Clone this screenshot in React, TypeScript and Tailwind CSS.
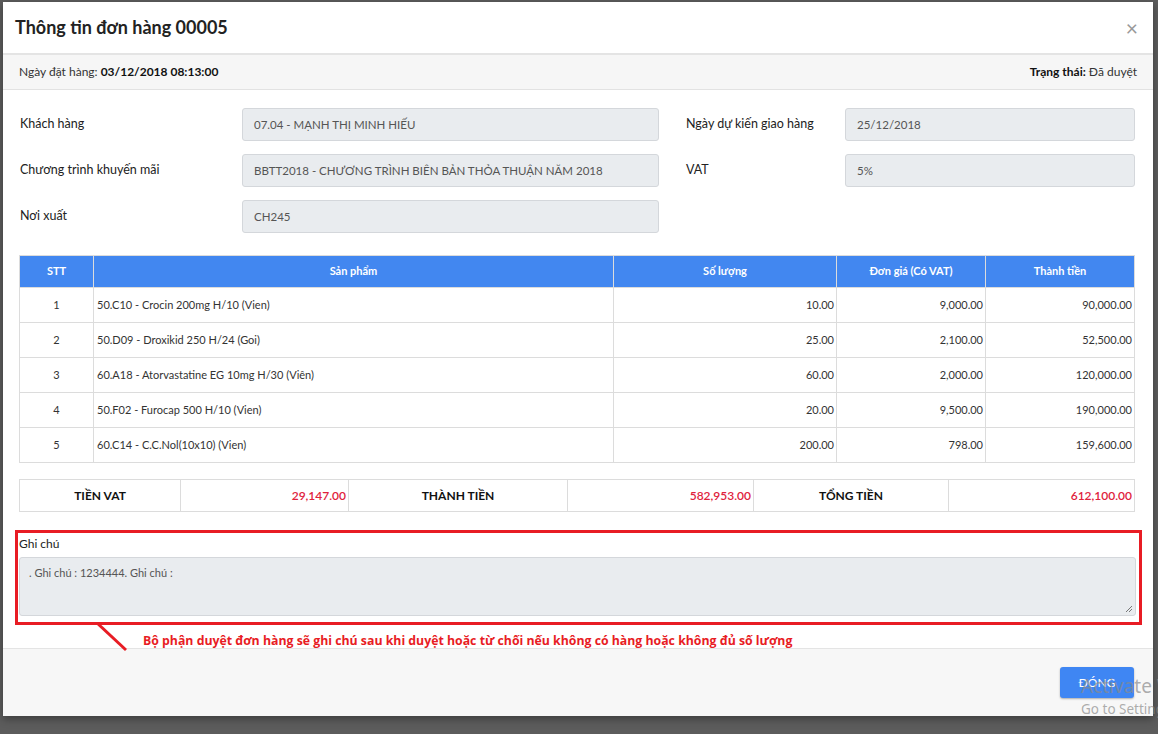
import React from 'react'

const font = {fontFamily: 'Lato, "Open Sans", "Noto Sans", sans-serif'}

const items = [
    {stt: 1, name: '50.C10 - Crocin 200mg H/10 (Vien)', qty: '10.00', price: '9,000.00', total: '90,000.00'},
    {stt: 2, name: '50.D09 - Droxikid 250 H/24 (Goi)', qty: '25.00', price: '2,100.00', total: '52,500.00'},
    {stt: 3, name: '60.A18 - Atorvastatine EG 10mg H/30 (Viên)', qty: '60.00', price: '2,000.00', total: '120,000.00'},
    {stt: 4, name: '50.F02 - Furocap 500 H/10 (Vien)', qty: '20.00', price: '9,500.00', total: '190,000.00'},
    {stt: 5, name: '60.C14 - C.C.Nol(10x10) (Vien)', qty: '200.00', price: '798.00', total: '159,600.00'},
]

function Field({label, value, labelW, inputW}: {label: string; value: string; labelW: string; inputW: string}) {
    return (
        <div className="flex items-start">
            <div className={`${labelW} shrink-0 pt-[7px] text-[12.5px] text-[#222]`}>{label}</div>
            <div className={`${inputW} h-[33px] rounded-[3px] border border-[#d4d7db] bg-[#e9ecef] px-[11px] flex items-center text-[11.5px] text-[#555]`}>
                {value}
            </div>
        </div>
    )
}

export default function App() {
    return (
        <div className="relative h-[734px] w-[1158px] overflow-hidden bg-[#5c5c5c]" style={font}>
            <div className="ml-[3px] mt-[2px] flex h-[714px] w-[1150px] flex-col bg-white shadow-[0_3px_8px_rgba(0,0,0,0.35)]">
                {/* header */}
                <div className="flex h-[53px] shrink-0 items-center justify-between border-b-2 border-[#e4e4e4] pl-[12px] pr-[15px]">
                    <h1 className="text-[18px] font-bold text-[#222]">Thông tin đơn hàng 00005</h1>
                    <span className="text-[21px] leading-none text-[#999]">×</span>
                </div>

                {/* sub bar */}
                <div className="flex h-[35px] shrink-0 items-center justify-between border-b border-[#e2e2e2] bg-[#f6f6f6] px-[16px] text-[12px] text-[#333]">
                    <div>
                        Ngày đặt hàng: <span className="font-bold text-[#111]">03/12/2018 08:13:00</span>
                    </div>
                    <div>
                        <span className="font-bold text-[#111]">Trạng thái:</span> Đã duyệt
                    </div>
                </div>

                {/* body */}
                <div className="relative min-h-0 flex-1 px-[16px] pt-[18px]">
                    <div className="flex gap-[27px] pl-[1px]">
                        <div className="flex flex-col gap-[13px]">
                            <Field label="Khách hàng" value="07.04 - MẠNH THỊ MINH HIẾU" labelW="w-[222px]" inputW="w-[417px]" />
                            <Field label="Chương trình khuyến mãi" value="BBTT2018 - CHƯƠNG TRÌNH BIÊN BẢN THỎA THUẬN NĂM 2018" labelW="w-[222px]" inputW="w-[417px]" />
                            <Field label="Nơi xuất" value="CH245" labelW="w-[222px]" inputW="w-[417px]" />
                        </div>
                        <div className="flex flex-col gap-[13px]">
                            <Field label="Ngày dự kiến giao hàng" value="25/12/2018" labelW="w-[159px]" inputW="w-[290px]" />
                            <Field label="VAT" value="5%" labelW="w-[159px]" inputW="w-[290px]" />
                        </div>
                    </div>

                    {/* items table */}
                    <table className="mt-[22px] w-[1116px] border-collapse text-[11px] text-[#333]">
                        <thead>
                            <tr className="h-[32px] bg-[#4287f0] text-white">
                                <th className="w-[74px] border border-[#dcdcdc] font-bold">STT</th>
                                <th className="w-[520px] border border-[#dcdcdc] font-bold">Sản phẩm</th>
                                <th className="w-[223px] border border-[#dcdcdc] font-bold">Số lượng</th>
                                <th className="w-[149px] border border-[#dcdcdc] font-bold">Đơn giá (Có VAT)</th>
                                <th className="border border-[#dcdcdc] font-bold">Thành tiền</th>
                            </tr>
                        </thead>
                        <tbody>
                            {items.map((it) => (
                                <tr key={it.stt} className="h-[35px]">
                                    <td className="border border-[#dcdcdc] text-center">{it.stt}</td>
                                    <td className="border border-[#dcdcdc] pl-[3px]">{it.name}</td>
                                    <td className="border border-[#dcdcdc] pr-[2px] text-right">{it.qty}</td>
                                    <td className="border border-[#dcdcdc] pr-[2px] text-right">{it.price}</td>
                                    <td className="border border-[#dcdcdc] pr-[2px] text-right">{it.total}</td>
                                </tr>
                            ))}
                        </tbody>
                    </table>

                    {/* totals */}
                    <table className="mt-[16px] w-[1116px] border-collapse text-[12px]">
                        <tbody>
                            <tr className="h-[32px]">
                                <td className="w-[161px] border border-[#dcdcdc] text-center font-bold text-[#111]">TIỀN VAT</td>
                                <td className="w-[168px] border border-[#dcdcdc] pr-[2px] text-right font-semibold text-[#e0223c]">29,147.00</td>
                                <td className="w-[219px] border border-[#dcdcdc] text-center font-bold text-[#111]">THÀNH TIỀN</td>
                                <td className="w-[186px] border border-[#dcdcdc] pr-[2px] text-right font-semibold text-[#e0223c]">582,953.00</td>
                                <td className="w-[195px] border border-[#dcdcdc] text-center font-bold text-[#111]">TỔNG TIỀN</td>
                                <td className="border border-[#dcdcdc] pr-[2px] text-right font-semibold text-[#e0223c]">612,100.00</td>
                            </tr>
                        </tbody>
                    </table>

                    {/* note, framed */}
                    <div className="ml-[-4px] mt-[18px] h-[95px] w-[1127px] border-[3px] border-[#e81c24] pl-[1px] pt-[2px]">
                        <div className="text-[12px] leading-[18px] text-[#222]">Ghi chú</div>
                        <div className="relative mt-[4px] h-[59px] w-[1117px] rounded-[3px] border border-[#d4d7db] bg-[#e9ecef] px-[9px] pt-[7px] text-[11px] text-[#555]">
                            . Ghi chú : 1234444. Ghi chú :
                            <svg className="absolute bottom-[2px] right-[2px]" width="8" height="8" viewBox="0 0 8 8">
                                <path d="M7 1L1 7M7 4L4 7" stroke="#777" strokeWidth="1" />
                            </svg>
                        </div>
                    </div>

                    <div
                        className="h-[23px] pl-[124px] pt-[7px] text-[12.3px] font-bold leading-[17px] text-[#e81c24]"
                        style={{fontFamily: '"Open Sans", "Noto Sans", sans-serif'}}
                    >
                        Bộ phận duyệt đơn hàng sẽ ghi chú sau khi duyệt hoặc từ chối nếu không có hàng hoặc không đủ số lượng
                    </div>

                    <svg className="absolute bottom-[-4px] left-[92px]" width="34" height="30" viewBox="0 0 34 30">
                        <path d="M2 1L31 28" stroke="#e81c24" strokeWidth="3" />
                    </svg>
                </div>

                {/* footer */}
                <div className="flex h-[68px] shrink-0 justify-end border-t border-[#e4e4e4] bg-[#f7f7f7] pr-[19px] pt-[18px]">
                    <button className="h-[31px] w-[74px] rounded-[3px] bg-[#3f86f3] text-[12px] text-white shadow-[0_1px_2px_rgba(0,0,0,0.3)]">
                        ĐÓNG
                    </button>
                </div>
            </div>

            {/* OS watermark */}
            <div className="pointer-events-none absolute left-[1081px] top-[673px] whitespace-nowrap text-[#8a8a8a]/70" style={{fontFamily: '"Noto Sans", sans-serif'}}>
                <div className="text-[19px] leading-[26px]">Activate Windows</div>
                <div className="text-[13.5px] leading-[20px]">Go to Settings to activate Windows.</div>
            </div>
        </div>
    )
}
